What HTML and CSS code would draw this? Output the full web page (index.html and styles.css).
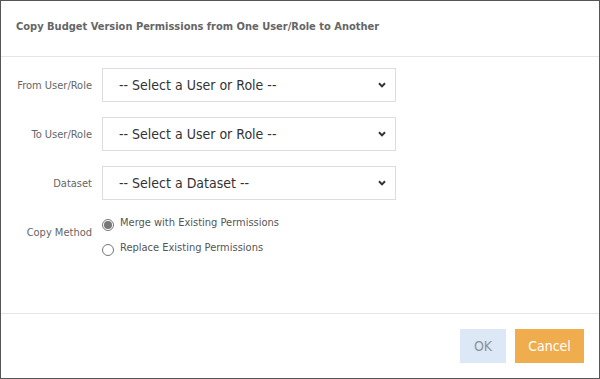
FILE: index.html
```html
<!DOCTYPE html>
<html>
<head>
<meta charset="utf-8">
<link rel="stylesheet" href="styles.css">
</head>
<body>
<div class="dialog">
  <div class="header">
    <h1 class="title">Copy Budget Version Permissions from One User/Role to Another</h1>
  </div>
  <div class="content">
    <div class="form">
      <label class="label">From User/Role</label>
      <div class="select">
        <span class="select-text">-- Select a User or Role --</span>
        <svg class="chev" width="8" height="6" viewBox="0 0 8 6"><path d="M1 1.2 L4 4.4 L7 1.2" fill="none" stroke="#333" stroke-width="2"/></svg>
      </div>
      <label class="label">To User/Role</label>
      <div class="select">
        <span class="select-text">-- Select a User or Role --</span>
        <svg class="chev" width="8" height="6" viewBox="0 0 8 6"><path d="M1 1.2 L4 4.4 L7 1.2" fill="none" stroke="#333" stroke-width="2"/></svg>
      </div>
      <label class="label">Dataset</label>
      <div class="select">
        <span class="select-text">-- Select a Dataset --</span>
        <svg class="chev" width="8" height="6" viewBox="0 0 8 6"><path d="M1 1.2 L4 4.4 L7 1.2" fill="none" stroke="#333" stroke-width="2"/></svg>
      </div>
      <label class="label">Copy Method</label>
      <div class="radios">
        <div class="radio-row"><span class="radio checked"></span><span class="radio-text">Merge with Existing Permissions</span></div>
        <div class="radio-row"><span class="radio"></span><span class="radio-text">Replace Existing Permissions</span></div>
      </div>
    </div>
  </div>
  <div class="footer">
    <button class="btn btn-ok">OK</button>
    <button class="btn btn-cancel">Cancel</button>
  </div>
</div>
</body>
</html>
```
FILE: styles.css
```css
* { box-sizing: border-box; }
html, body { margin: 0; padding: 0; background: #fff; }
body { font-family: "DejaVu Sans Condensed", "DejaVu Sans", sans-serif; }
.dialog {
  width: 600px;
  height: 379px;
  border: 1px solid #555;
  display: flex;
  flex-direction: column;
  background: #fff;
}
.header {
  height: 56px;
  border-bottom: 1px solid #e5e5e5;
  display: flex;
  align-items: center;
  padding: 0 15px 4px;
}
.title {
  margin: 0;
  font-size: 11px;
  font-weight: bold;
  color: #666;
}
.content {
  flex: 1;
  padding: 11px 0 0 0;
  border-bottom: 1px solid #e5e5e5;
}
.form {
  display: grid;
  grid-template-columns: 91px 294px;
  column-gap: 10px;
  row-gap: 15px;
  grid-auto-rows: 34px;
}
.label {
  font-size: 11px;
  color: #666;
  text-align: right;
  align-self: center;
}
.select {
  height: 34px;
  border: 1px solid #ddd;
  display: flex;
  align-items: center;
  justify-content: space-between;
  padding: 0 9px 0 16px;
  font-size: 14px;
  color: #333;
}
.chev { display: block; }
.radios {
  display: flex;
  flex-direction: column;
  gap: 10px;
  padding-top: 1px;
}
.radio-row {
  display: flex;
  align-items: flex-start;
  gap: 6px;
  font-size: 11px;
  color: #555;
}
.radio {
  width: 12px;
  height: 12px;
  border: 1px solid #777;
  border-radius: 50%;
  margin-top: 3px;
  display: flex;
  align-items: center;
  justify-content: center;
}
.radio.checked::after {
  content: "";
  width: 8px;
  height: 8px;
  border-radius: 50%;
  background: #777;
}
.radio-text { line-height: 13px; }
.footer {
  height: 64px;
  display: flex;
  justify-content: flex-end;
  align-items: flex-start;
  padding: 15px 15px 0 0;
  gap: 9px;
}
.btn {
  height: 34px;
  border: none;
  font-family: inherit;
  font-size: 14px;
  padding: 0;
}
.btn-ok {
  width: 46px;
  background: #dce8f5;
  color: #8c939c;
}
.btn-cancel {
  width: 69px;
  background: #f0ad4e;
  color: #fff;
}
```
